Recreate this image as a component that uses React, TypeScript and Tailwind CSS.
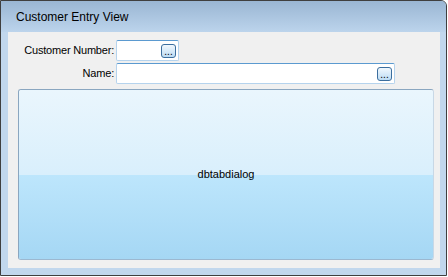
import React from 'react';

function BrowseButton() {
  return (
    <div className="w-[15px] h-[14px] rounded-[3px] border border-[#3c6e9e] bg-gradient-to-b from-[#f2f8fd] to-[#bcdcf4] flex items-end justify-center pb-[1px]">
      <span className="text-[10px] leading-[8px] text-black">...</span>
    </div>
  );
}

function TextBox({ width }: { width: string }) {
  return (
    <div
      className={`${width} h-[21px] rounded-[2px] border border-[#b5d3ed] border-t-[#5b9ad0] bg-white flex items-center justify-end pr-[2px]`}
    >
      <BrowseButton />
    </div>
  );
}

export default function App() {
  return (
    <div
      className="w-[448px] h-[277px] bg-white text-black"
      style={{ fontFamily: '"Liberation Sans", Arial, sans-serif' }}
    >
      <div className="w-[447px] h-[276px] border border-[#3f3f3f] rounded-tr-[6px] bg-[#c1d7ed] flex flex-col overflow-hidden">
        {/* Title */}
        <div className="h-[31px] flex items-center pl-[15px] text-[12px] bg-gradient-to-b from-[#9ab6d3] to-[#bcd4ec]">
          Customer Entry View
        </div>

        {/* Client area */}
        <div className="flex-1 ml-[7px] mr-[6px] mb-[7px] bg-[#f0f0f0] flex flex-col pl-[10px] pr-[5px] pt-[8px] pb-[8px]">
          <div className="flex items-center h-[21px]">
            <div className="w-[98px] text-right text-[11px] tracking-[-0.2px] pr-[2px] whitespace-nowrap">Customer Number:</div>
            <TextBox width="w-[63px]" />
          </div>
          <div className="flex items-center h-[21px] mt-[2px]">
            <div className="w-[98px] text-right text-[11px] tracking-[-0.2px] pr-[2px] whitespace-nowrap">Name:</div>
            <TextBox width="w-[279px]" />
          </div>

          <div className="mt-[5px] mr-[1px] flex-1 rounded-[3px] border border-[#8aa6c0] border-r-[#c8d8e6] border-b-[#9cb8d0] flex flex-col overflow-hidden relative">
            <div className="h-[85px] bg-gradient-to-b from-[#eaf6fd] to-[#d9effc]" />
            <div className="flex-1 bg-gradient-to-b from-[#bde6fc] to-[#a5d7f4]" />
            <div className="absolute inset-0 flex items-center justify-center text-[11px]">dbtabdialog</div>
          </div>
        </div>
      </div>
    </div>
  );
}
